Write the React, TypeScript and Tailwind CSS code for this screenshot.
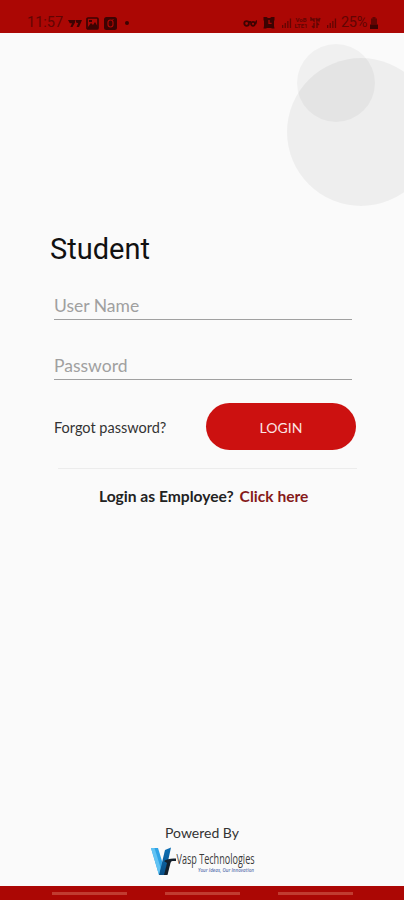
import { useState } from "react";

const NAV_KEYS = ["recents", "home", "back"];

function Signal({ className = "" }: { className?: string }) {
  return (
    <svg viewBox="0 0 10 10" className={`h-[10px] w-[10px] ${className}`} fill="currentColor">
      <rect x="0" y="7" width="1.3" height="3" />
      <rect x="2.6" y="5" width="1.3" height="5" />
      <rect x="5.2" y="3" width="1.3" height="7" />
      <rect x="7.8" y="0.5" width="1.3" height="9.5" />
    </svg>
  );
}

function StatusBar() {
  return (
    <header className="flex h-[33px] shrink-0 items-end justify-between bg-[#ab0704] pb-[2px] pl-[27px] pr-[26px] text-[#620503]">
      <div className="flex h-4 items-center">
        <span className="w-[36px] whitespace-nowrap font-['Roboto',sans-serif] text-[14.5px] leading-4">11:57</span>
        <svg viewBox="0 0 14 9" className="ml-[5px] h-[9px] w-[14px] text-[#3d0302]" fill="currentColor">
          <path d="M0 1h7v2.5L4.5 8H2.4L4 4.2H1.8z" />
          <path d="M7.4 1H14L11 8H8.6L10.2 4H8.6z" />
        </svg>
        <svg viewBox="0 0 13 13" className="ml-1 h-[13px] w-[13px] text-[#3d0302]">
          <rect x="1" y="1" width="11" height="11" rx="1" fill="none" stroke="currentColor" strokeWidth="1.7" />
          <path d="M2 10l3-4 2 2 2-3 3 5v2H2z" fill="currentColor" />
          <path d="M3 3h3v2H3z" fill="currentColor" />
        </svg>
        <svg viewBox="0 0 13 13" className="ml-[5px] h-[13px] w-[13px] text-[#3d0302]">
          <rect width="13" height="13" rx="2.5" fill="currentColor" />
          <rect x="4" y="3" width="5" height="7" rx="2.4" fill="none" stroke="#ab0704" strokeWidth="1.2" />
          <path d="M8.5 3l1-1" stroke="#ab0704" />
        </svg>
        <span className="ml-[8px] h-1 w-1 rounded-full bg-[#3d0302]" />
      </div>

      <div className="flex h-4 items-center">
        <svg viewBox="0 0 15 9" className="h-[9px] w-[15px] text-[#3d0302]" fill="none" stroke="currentColor" strokeWidth="1.8">
          <circle cx="3.6" cy="4.5" r="2.3" />
          <circle cx="10" cy="4.8" r="2" />
          <path d="M5 3h3M14 2c-.8 0-1 1-1.500 3" />
        </svg>
        <svg viewBox="0 0 12 12" className="ml-[5px] h-3 w-3 text-[#3d0302]">
          <path d="M.5 0h3L5 1h2l1.500-1h3v3L11 4v5l.5 2.500H9L8 11H4l-1 .5H.5L1 9V4L.5 3z" fill="currentColor" />
          <path d="M6 3v3.4h2.6" fill="none" stroke="#ab0704" strokeWidth="1.3" />
        </svg>
        <Signal className="ml-[7px]" />
        <span className="ml-[2px] w-[14px] text-center font-['Roboto',sans-serif] text-[6px] font-bold leading-[6px]">
          VoB
          <br />
          LTE1
        </span>
        <svg viewBox="0 0 11 12" className="ml-[2px] h-3 w-[11px]" fill="none" stroke="currentColor" strokeWidth="1.4">
          <path d="M1 4V1l3 3V1M6 1l1 3 1-2 1 2 1-3M4 6v5M2 9l2 2M7 11V6l2 2" />
        </svg>
        <Signal className="ml-[6px]" />
        <span className="ml-[4px] w-[29px] whitespace-nowrap font-['Roboto',sans-serif] text-[14.5px] leading-4 tracking-[-0.3px]">25%</span>
        <svg viewBox="0 0 8 12" className="h-3 w-2 text-[#3d0302]" fill="currentColor">
          <path d="M2.5 0h3v1.5H7v6H1v-6h1.5z" opacity=".65" />
          <path d="M0 7.5h8V12H0z" />
        </svg>
      </div>
    </header>
  );
}

function Bubbles() {
  return (
    <div className="pointer-events-none absolute inset-0 overflow-hidden">
      <div className="absolute left-[287px] top-[25px] h-[148px] w-[148px] rounded-full bg-black/[0.046]" />
      <div className="absolute left-[297px] top-[11px] h-[78px] w-[78px] rounded-full bg-black/[0.038]" />
    </div>
  );
}

function VaspLogo() {
  return (
    <svg viewBox="0 0 106 30" className="h-[30px] w-[106px] overflow-visible" role="img" aria-label="Vasp Technologies">
      <defs>
        <linearGradient id="vasp" x1="0" y1="0" x2="0" y2="1">
          <stop offset="0" stopColor="#0d6fb4" />
          <stop offset="1" stopColor="#0a4f86" />
        </linearGradient>
      </defs>
      <path d="M0 1h7l4 13-1 14H8z" fill="#2fa3e6" />
      <path d="M0 1h3.5L10 22l-.5 6H8z" fill="#62c3f3" />
      <path d="M14 3l6-2.500L14 28H8z" fill="url(#vasp)" />
      <path d="M13 14q4-3 12-2.500v2.500h-3.500q-1.500 0-2 2L16.500 28H13l3-12z" fill="#14202c" />
      <g transform="translate(25.5 17) scale(0.64 1)">
        <text
          textLength="122"
          lengthAdjust="spacingAndGlyphs"
          fontFamily="'Open Sans', sans-serif"
          fontSize="14.5"
          fill="#3a3a3a"
        >
          Vasp Technologies
        </text>
      </g>
      <text
        x="47"
        y="25"
        textLength="56"
        lengthAdjust="spacingAndGlyphs"
        fontFamily="'Open Sans', sans-serif"
        fontSize="4.5"
        fontStyle="italic"
        fontWeight="600"
        fill="#5f76b0"
      >
        Your Ideas, Our Innovation
      </text>
    </svg>
  );
}

export default function App() {
  const [userName, setUserName] = useState("");
  const [password, setPassword] = useState("");

  const inputClass =
    "block h-[31px] w-full border-b-[1.5px] border-[#a0a0a0] bg-transparent pt-[2px] text-[17.5px] leading-6 text-[#222] outline-none placeholder:text-[#a0a0a0]";

  return (
    <div className="flex h-[900px] w-[404px] flex-col overflow-hidden bg-[#fafafa] font-['Lato',sans-serif]">
      <StatusBar />

      <main className="relative flex flex-1 flex-col">
        <Bubbles />

        <form className="relative mt-[197px]" onSubmit={(e) => e.preventDefault()}>
          <h1 className="ml-[50px] font-['Roboto',sans-serif] text-[29px] leading-[38px] text-[#111]">Student</h1>

          <div className="ml-[54px] mt-[21px] w-[298px]">
            <input
              className={inputClass}
              placeholder="User Name"
              value={userName}
              onChange={(e) => setUserName(e.target.value)}
            />
            <input
              type="password"
              className={`mt-[29px] ${inputClass}`}
              placeholder="Password"
              value={password}
              onChange={(e) => setPassword(e.target.value)}
            />
          </div>

          <div className="ml-[54px] mr-[48px] mt-[23px] flex items-center justify-between">
            <a href="#" className="pt-[3px] text-[14.5px] leading-5 text-[#333]">Forgot password?</a>
            <button type="submit" className="h-[47px] w-[150px] rounded-full bg-[#cc1110] pt-[2px] text-[14px] text-[#fbe4e4]">
              LOGIN
            </button>
          </div>
        </form>

        <div className="ml-[58px] mt-[18px] w-[299px] border-t border-[#ececec]" />

        <p className="ml-[99px] mt-[17px] flex gap-[6px] whitespace-nowrap text-[15.6px] font-bold leading-5 text-[#222]">
          <span>Login as Employee?</span>
          <a href="#" className="text-[#861a1a]">Click here</a>
        </p>

        <div className="mt-auto flex flex-col items-center pb-[9px]">
          <span className="text-[14px] leading-5 text-[#333]">Powered By</span>
          <div className="ml-[3px] mt-1">
            <VaspLogo />
          </div>
        </div>
      </main>

      <footer className="flex h-[14px] shrink-0 justify-center gap-[38px] bg-[#ab0704] pt-[6px]">
        {NAV_KEYS.map((key) => (
          <span key={key} className="h-[3px] w-[75px] bg-[#c13b30]" />
        ))}
      </footer>
    </div>
  );
}
